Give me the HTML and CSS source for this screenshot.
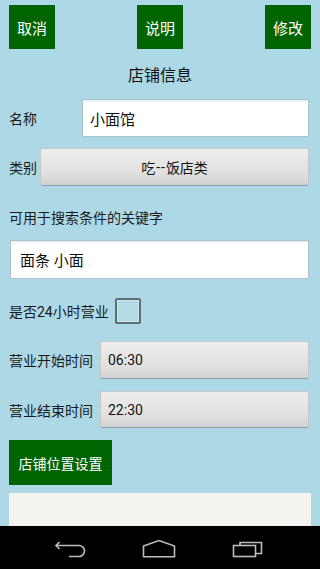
FILE: index.html
```html
<!DOCTYPE html>
<html lang="zh">
<head>
<meta charset="utf-8">
<title>店铺信息</title>
<link rel="stylesheet" href="styles.css">
</head>
<body>
<div class="screen">
  <div class="topbar">
    <div class="gbtn">取消</div>
    <div class="gbtn">说明</div>
    <div class="gbtn">修改</div>
  </div>
  <div class="title">店铺信息</div>
  <div class="form">
    <div class="row row-name">
      <div class="label lbl-name">名称</div>
      <div class="input">小面馆</div>
    </div>
    <div class="row row-cat">
      <div class="label lbl-cat">类别</div>
      <div class="button center">吃<span class="dash">--</span>饭店类</div>
    </div>
    <div class="kw-label">可用于搜索条件的关键字</div>
    <div class="input kw-input">面条 小面</div>
    <div class="row row-check">
      <div class="label">是否24小时营业</div>
      <div class="checkbox"></div>
    </div>
    <div class="row row-time1">
      <div class="label lbl-time">营业开始时间</div>
      <div class="button">06:30</div>
    </div>
    <div class="row row-time2">
      <div class="label lbl-time">营业结束时间</div>
      <div class="button">22:30</div>
    </div>
    <div class="gbtn loc">店铺位置设置</div>
  </div>
  <div class="panel"></div>
  <div class="navbar">
    <svg class="nav-ico" width="32" height="20" viewBox="0 0 32 20">
      <path d="M5.5 4 L2 7.5 L5.5 11 M2 7.5 H25 A5.5 5.5 0 0 1 25 18.5 H15" fill="none" stroke="#bdbdbd" stroke-width="1.6"/>
    </svg>
    <svg class="nav-ico" width="34" height="20" viewBox="0 0 34 20">
      <path d="M1.5 8 L17 2.5 L32.5 8 V18.8 H1.5 Z" fill="none" stroke="#bdbdbd" stroke-width="1.6"/>
    </svg>
    <svg class="nav-ico" width="32" height="20" viewBox="0 0 32 20">
      <rect x="1.5" y="7.5" width="22" height="11" fill="none" stroke="#bdbdbd" stroke-width="1.6"/>
      <path d="M8 7.5 V4.5 H29.5 V15.5 H23.5" fill="none" stroke="#bdbdbd" stroke-width="1.6"/>
    </svg>
  </div>
</div>
</body>
</html>
```
FILE: styles.css
```css
html, body {
  margin: 0;
  padding: 0;
}
body {
  width: 320px;
  height: 569px;
  overflow: hidden;
  background: #add8e6;
  font-family: Roboto, "Noto Sans CJK SC", sans-serif;
  color: #1a1a1a;
}
.screen {
  width: 320px;
  height: 569px;
  display: flex;
  flex-direction: column;
}
.topbar {
  margin-top: 5px;
  height: 44px;
  padding: 0 9px;
  display: flex;
  justify-content: space-between;
}
.gbtn {
  background: #006400;
  color: #fff;
  font-size: 15px;
  width: 46px;
  height: 44px;
  display: flex;
  align-items: center;
  justify-content: center;
}
.title {
  margin-top: 17px;
  height: 20px;
  line-height: 20px;
  font-size: 16px;
  text-align: center;
  color: #111;
}
.form {
  padding: 0 11px 0 9px;
  display: flex;
  flex-direction: column;
}
.row {
  display: flex;
  align-items: center;
}
.label {
  font-size: 14px;
  color: #1a1a1a;
  flex: none;
}
.lbl-name { width: 73px; }
.lbl-cat { width: 31px; }
.lbl-time { width: 91px; }
.row-name { margin-top: 13px; height: 38px; }
.row-cat { margin-top: 11px; height: 38px; }
.input {
  box-sizing: border-box;
  flex: 1;
  height: 100%;
  background: linear-gradient(#e9ecee 0, #fff 3px, #fff 100%);
  border: 1px solid #a9c4cc;
  display: flex;
  align-items: center;
  padding-left: 7px;
  font-size: 15px;
  color: #111;
}
.button {
  box-sizing: border-box;
  flex: 1;
  height: 100%;
  background: linear-gradient(#ededed, #e2e2e2 60%, #d3d3d3);
  border: 1px solid #c7c7c7;
  border-bottom: 1px solid #8d9ea4;
  border-radius: 2px;
  display: flex;
  align-items: center;
  padding-left: 7px;
  font-size: 14px;
  color: #111;
}
.button.center {
  justify-content: center;
  padding-left: 0;
}
.dash {
  letter-spacing: 1px;
  padding-left: 1px;
}
.kw-label {
  margin-top: 22px;
  height: 20px;
  line-height: 20px;
  font-size: 14px;
}
.kw-input {
  margin-top: 12px;
  margin-left: 1px;
  height: 39px;
  flex: none;
  padding-left: 9px;
}
.row-check {
  margin-top: 19px;
  height: 26px;
}
.checkbox {
  box-sizing: border-box;
  margin-left: 6px;
  width: 26px;
  height: 26px;
  border: 2px solid #5f6f76;
  outline: 1px solid #cde6ee;
  outline-offset: -3px;
  background: #b6dbe7;
  border-radius: 2px;
}
.row-time1 { margin-top: 17px; height: 38px; }
.row-time2 { margin-top: 12px; height: 37px; }
.loc {
  margin-top: 12px;
  width: 103px;
  height: 45px;
  font-size: 14px;
}
.panel {
  margin: 8px 9px 0 9px;
  flex: 1;
  background: #f4f3ef;
}
.navbar {
  height: 43px;
  background: #000;
  display: flex;
  align-items: center;
  padding-left: 54px;
  gap: 56px;
}
.nav-ico {
  display: block;
}
```
